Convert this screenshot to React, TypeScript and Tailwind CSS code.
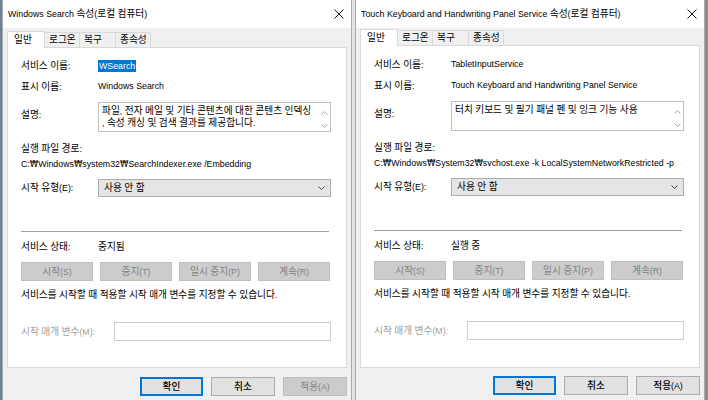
import React from 'react';

// Hangul runs are set a little larger than the Latin text, as Malgun Gothic is next to Segoe UI
const T = (s: string) =>
  s.split(/([\uac00-\ud7af]+|₩)/).map((p, i) => {
    if (p === '₩')
      return (
        <span key={i} className="font-['DejaVu_Sans'] text-[8.5px]">
          ₩
        </span>
      );
    if (/[\uac00-\ud7af]/.test(p))
      return (
        <span key={i} className="text-[9.7px]">
          {p}
        </span>
      );
    return p;
  });

type DialogProps = {
  title: string;
  serviceName: string;
  nameSelected?: boolean;
  displayName: string;
  desc: string[];
  path: string;
  status: string;
  applyEnabled?: boolean;
  raise?: boolean;
};

const Chevron = ({ up }: { up?: boolean }) => (
  <svg width="7" height="4" viewBox="0 0 7 4" className="block">
    <polyline
      points={up ? '0.5,3.5 3.5,0.5 6.5,3.5' : '0.5,0.5 3.5,3.5 6.5,0.5'}
      fill="none"
      stroke="#a6a6a6"
      strokeWidth="1"
    />
  </svg>
);

const Tab = ({ label, active, w }: { label: string; active?: boolean; w: string }) => (
  <div
    className={
      active
        ? `relative z-10 -mb-px h-[17px] bg-white border border-b-0 border-[#d9d9d9] pl-[6px] pt-[2px] leading-[12px] ${w}`
        : `-ml-px h-[15px] bg-[#f0f0f0] border border-b-0 border-[#d9d9d9] pl-[4px] pt-px leading-[12px] ${w}`
    }
  >
    {T(label)}
  </div>
);

const SmallButton = ({ label }: { label: string }) => (
  <div className="w-[72px] h-[19px] bg-[#cccccc] border border-[#bfbfbf] text-[#838383] flex items-center justify-center">
    <span>{T(label)}</span>
  </div>
);

const Dialog: React.FC<DialogProps> = ({
  title,
  serviceName,
  nameSelected,
  displayName,
  desc,
  path,
  status,
  applyEnabled,
  raise,
}) => {
  return (
    <div className="w-[350px] h-[400px] flex flex-col bg-[#f0f0f0] border-x border-[#a9a9a9]">
      {/* Title bar */}
      <div className="h-[28px] bg-white flex items-center justify-between pl-[5px] pr-[7px]">
        <span className="text-black">{T(title)}</span>
        <svg width="10" height="10" viewBox="0 0 10 10">
          <line x1="0.5" y1="0.5" x2="9.5" y2="9.5" stroke="#111" strokeWidth="1" />
          <line x1="9.5" y1="0.5" x2="0.5" y2="9.5" stroke="#111" strokeWidth="1" />
        </svg>
      </div>

      <div className={`pl-[4px] ${raise ? 'pt-[1px]' : 'pt-[3px]'}`}>
        {/* Tabs */}
        <div className="h-[16px] flex items-end">
          <Tab label="일반" active w="w-[38px]" />
          <Tab label="로그온" w="w-[36px]" />
          <Tab label="복구" w="w-[37px]" />
          <Tab label="종속성" w="w-[36px]" />
        </div>

        {/* Panel */}
        <div
          className={`w-[340px] ${raise ? 'h-[323px]' : 'h-[321px]'} bg-white border border-[#d9d9d9] pl-[13px] ${
            raise ? 'pt-[12px]' : 'pt-[11px]'
          }`}
        >
          <div className="h-[13px] flex items-center">
            <span className="w-[77px]">{T('서비스 이름:')}</span>
            {nameSelected ? (
              <span className="bg-[#0078d7] text-white h-[12px] leading-[12px] px-px">{serviceName}</span>
            ) : (
              <span>{serviceName}</span>
            )}
          </div>
          <div className="mt-[8px] h-[13px] flex items-center">
            <span className="w-[77px]">{T('표시 이름:')}</span>
            <span>{displayName}</span>
          </div>

          <div className="mt-[9px] flex">
            <span className="w-[77px] pt-[6px] leading-[13px]">{T('설명:')}</span>
            <div className="w-[233px] h-[30px] border border-[#bfbfbf] flex justify-between">
              <div className="pl-[3px] pt-[2px] leading-[11px]">
                {desc.map((d, i) => (
                  <div key={i}>{T(d)}</div>
                ))}
              </div>
              <div className="w-[11px] flex flex-col items-center justify-between pt-[8px] pb-[3px]">
                <Chevron up />
                <Chevron />
              </div>
            </div>
          </div>

          <div className="mt-[9px] leading-[15px]">{T('실행 파일 경로:')}</div>
          <div className="leading-[15px] whitespace-nowrap">{T(path)}</div>

          <div className="mt-[7px] h-[18px] flex items-center">
            <span className="w-[77px]">{T('시작 유형(E):')}</span>
            <div className="w-[233px] h-[18px] bg-[#e5e5e5] border border-[#adadad] flex items-center justify-between pl-[5px] pr-[5px]">
              <span>{T('사용 안 함')}</span>
              <svg width="7" height="4" viewBox="0 0 7 4">
                <polyline points="0.5,0.5 3.5,3.5 6.5,0.5" fill="none" stroke="#444" strokeWidth="1" />
              </svg>
            </div>
          </div>

          <div className="mt-[34px] h-px w-[308px] bg-[#a0a0a0]" />

          <div className="mt-[8px] h-[13px] flex items-center">
            <span className="w-[77px]">{T('서비스 상태:')}</span>
            <span>{T(status)}</span>
          </div>

          <div className="mt-[9px] flex gap-[7px]">
            <SmallButton label="시작(S)" />
            <SmallButton label="중지(T)" />
            <SmallButton label="일시 중지(P)" />
            <SmallButton label="계속(R)" />
          </div>

          <div className="mt-[7px] h-[13px] flex items-center">
            <span>{T('서비스를 시작할 때 적용할 시작 매개 변수를 지정할 수 있습니다.')}</span>
          </div>

          <div className="mt-[21px] h-[19px] flex items-center">
            <span className="w-[93px] text-[#a0a0a0]">{T('시작 매개 변수(M):')}</span>
            <div className="w-[217px] h-[19px] bg-white border border-[#cccccc]" />
          </div>
        </div>

        {/* Dialog buttons */}
        <div className={`flex justify-end gap-[8px] pr-[4px] ${raise ? 'mt-[8px]' : 'mt-[9px]'}`}>
          <div className="w-[63px] h-[19px] bg-[#e1e1e1] border-2 border-[#0078d7] flex items-center justify-center font-medium">
            <span>{T('확인')}</span>
          </div>
          <div className="w-[64px] h-[19px] bg-[#e1e1e1] border border-[#adadad] flex items-center justify-center font-medium">
            <span>{T('취소')}</span>
          </div>
          {applyEnabled ? (
            <div className="w-[64px] h-[19px] bg-[#e1e1e1] border border-[#adadad] flex items-center justify-center font-medium">
              <span>{T('적용(A)')}</span>
            </div>
          ) : (
            <div className="w-[64px] h-[19px] bg-[#cccccc] border border-[#bfbfbf] text-[#838383] flex items-center justify-center">
              <span>{T('적용(A)')}</span>
            </div>
          )}
        </div>
      </div>
    </div>
  );
};

export default function App() {
  return (
    <div className="w-[708px] h-[400px] flex overflow-hidden bg-[#e6e6e6] text-[8.8px] text-black font-['Liberation_Sans','Noto_Sans_CJK_KR',sans-serif] leading-[13px]">
      <div className="w-[2px] h-full bg-[#6f8198]" />
      <Dialog
        title="Windows Search 속성(로컬 컴퓨터)"
        serviceName="WSearch"
        nameSelected
        displayName="Windows Search"
        desc={['파일, 전자 메일 및 기타 콘텐츠에 대한 콘텐츠 인덱싱', ', 속성 캐싱 및 검색 결과를 제공합니다.']}
        path="C:₩Windows₩system32₩SearchIndexer.exe /Embedding"
        status="중지됨"
      />
      <div className="w-[3px] h-full bg-[#e4e4e4]" />
      <Dialog
        title="Touch Keyboard and Handwriting Panel Service 속성(로컬 컴퓨터)"
        serviceName="TabletInputService"
        displayName="Touch Keyboard and Handwriting Panel Service"
        desc={['터치 키보드 및 필기 패널 펜 및 잉크 기능 사용']}
        path="C:₩Windows₩System32₩svchost.exe -k LocalSystemNetworkRestricted -p"
        status="실행 중"
        applyEnabled
        raise
      />
      <div className="w-[3px] h-full bg-[#8a8a8a]" />
    </div>
  );
}
